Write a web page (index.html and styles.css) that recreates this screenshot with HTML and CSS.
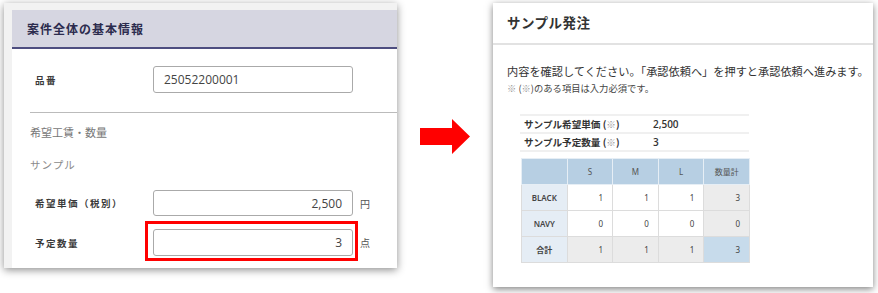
FILE: index.html
```html
<!DOCTYPE html>
<html lang="ja">
<head>
  <meta charset="UTF-8" />
  <title>サンプル発注</title>
  <link rel="stylesheet" href="styles.css">
</head>
<body>
  <div class="page">

    <!-- 入力画面 -->
    <div class="shot shot-left">
      <div class="card">
        <div class="card-head">案件全体の基本情報</div>
        <div class="card-body">
          <div class="row row-first">
            <span class="label">品番</span>
            <span class="input">25052200001</span>
          </div>
          <div class="sep"></div>
          <div class="section">希望工賃・数量</div>
          <div class="sub">サンプル</div>
          <div class="row row-price">
            <span class="label">希望単価（税別）</span>
            <span class="input num">2,500</span>
            <span class="unit">円</span>
          </div>
          <div class="row row-qty">
            <span class="label">予定数量</span>
            <span class="mark-wrap">
              <span class="input num">3</span>
              <span class="mark"></span>
            </span>
            <span class="unit">点</span>
          </div>
        </div>
      </div>
    </div>

    <div class="arrow">
      <svg width="50" height="36" viewBox="0 0 50 36">
        <polygon points="0,9 32,9 32,0 50,17.5 32,35 32,26 0,26" fill="#ff0000" />
      </svg>
    </div>

    <!-- 確認画面 -->
    <div class="shot shot-right">
      <div class="modal-head">サンプル発注</div>
      <div class="modal-body">
        <p class="lead">内容を確認してください。「承認依頼へ」を押すと承認依頼へ進みます。</p>
        <p class="note"><span class="kome">※</span> (<span class="kome">※</span>)のある項目は入力必須です。</p>

        <table class="info">
          <tr><th>サンプル希望単価 (<span class="kome">※</span>)</th><td>2,500</td></tr>
          <tr><th>サンプル予定数量 (<span class="kome">※</span>)</th><td>3</td></tr>
        </table>

        <table class="grid">
          <tr class="head">
            <th></th><th>S</th><th>M</th><th>L</th><th>数量計</th>
          </tr>
          <tr>
            <th class="side">BLACK</th><td>1</td><td>1</td><td>1</td><td class="sum">3</td>
          </tr>
          <tr>
            <th class="side">NAVY</th><td>0</td><td>0</td><td>0</td><td class="sum">0</td>
          </tr>
          <tr class="total">
            <th class="side">合計</th><td>1</td><td>1</td><td>1</td><td class="grand">3</td>
          </tr>
        </table>
      </div>
    </div>

  </div>
</body>
</html>
```

FILE: styles.css
```css
body {
  margin: 0;
  background: #fff;
  font-family: "Noto Sans CJK JP", "Noto Sans", sans-serif;
  color: #333;
}
.page {
  display: flex;
  align-items: flex-start;
  width: 878px;
  height: 293px;
  overflow: hidden;
}
.shot {
  box-shadow: 0 2px 8px rgba(0, 0, 0, 0.45);
}

/* left screenshot */
.shot-left {
  margin: 3px 0 0 4px;
  width: 393px;
  height: 265px;
  background: #f2f2f2;
  padding: 7px 0 0 8px;
  box-sizing: border-box;
  overflow: hidden;
}
.card {
  background: #fff;
  height: 100%;
}
.card-head {
  height: 37px;
  line-height: 37px;
  background: #d6d6e1;
  border-bottom: 2px solid #4e4e80;
  padding-left: 15px;
  font-size: 12px;
  font-weight: bold;
  color: #2c2c4e;
  letter-spacing: 1px;
}
.card-body {
  padding-left: 18px;
}
.row {
  display: flex;
  align-items: center;
  height: 27px;
}
.row-first {
  margin-top: 17px;
}
.row-price {
  margin-top: 15px;
  height: 26px;
}
.row-qty {
  margin-top: 13px;
}
.label {
  width: 118px;
  padding-left: 5px;
  font-size: 9.5px;
  font-weight: bold;
  color: #3a3a3a;
  letter-spacing: 1.5px;
}
.input {
  display: block;
  width: 200px;
  height: 100%;
  box-sizing: border-box;
  border: 1px solid #aaa;
  border-radius: 3px;
  padding: 0 10px;
  font-family: "Open Sans", "Noto Sans", sans-serif;
  font-size: 12px;
  line-height: 25px;
  color: #444;
}
.num {
  text-align: right;
}
.unit {
  margin-left: 7px;
  font-size: 10px;
  color: #555;
}
.mark-wrap {
  position: relative;
  height: 100%;
}
.mark {
  position: absolute;
  left: -8px;
  top: -8px;
  right: -5px;
  bottom: -5px;
  border: 3px solid #f00;
}
.sep {
  margin-top: 19px;
  border-top: 1px solid #bbb;
}
.section {
  margin-top: 9px;
  line-height: 20px;
  font-size: 11px;
  color: #777;
}
.sub {
  margin-top: 13px;
  line-height: 20px;
  font-size: 10.5px;
  color: #8a8a8a;
  letter-spacing: 1px;
}

/* arrow */
.arrow {
  margin: 119px 0 0 23px;
  width: 73px;
}

/* right screenshot */
.shot-right {
  margin-top: 3px;
  width: 380px;
  height: 284px;
  background: #fff;
  box-shadow: 0 2px 7px rgba(0, 0, 0, 0.5);
}
.modal-head {
  height: 40px;
  line-height: 38px;
  padding-left: 14px;
  font-size: 13.5px;
  font-weight: bold;
  color: #333;
  letter-spacing: 0.5px;
  border-bottom: 2px solid #e2e2e2;
}
.modal-body {
  padding: 18px 0 0 14px;
}
.lead {
  margin: 0;
  font-size: 11.2px;
  line-height: 16px;
  white-space: nowrap;
  color: #333;
}
.note {
  margin: 2px 0 0;
  font-size: 9.3px;
  line-height: 14px;
  color: #444;
}
.kome {
  color: #999;
}
.info {
  margin: 19px 0 0 13px;
  width: 229px;
  border-collapse: collapse;
  border-top: 2px solid #f0f0f0;
}
.info tr {
  border-bottom: 2px solid #f0f0f0;
}
.info th {
  width: 128px;
  text-align: left;
  padding: 0 0 0 4px;
  height: 15px;
  font-size: 9.6px;
  font-weight: bold;
  color: #333;
}
.info td {
  font-family: "Open Sans", "Noto Sans", sans-serif;
  font-size: 10px;
  font-weight: 600;
  color: #333;
}
.grid {
  margin: 6px 0 0 14px;
  width: 229px;
  border-collapse: collapse;
  table-layout: fixed;
  font-family: "Noto Sans", "Noto Sans CJK JP", sans-serif;
  font-size: 8px;
}
.grid th,
.grid td {
  height: 25px;
  border: 1px solid #dcdcdc;
  padding: 0 9px;
  color: #444;
}
.grid .head th {
  background: #b7cfe3;
  border-color: #e6eef5;
  text-align: center;
  font-weight: normal;
  color: #555;
}
.grid .side {
  background: #e5edf5;
  text-align: center;
  font-weight: 600;
}
.grid td {
  text-align: right;
  background: #fff;
}
.grid td.sum,
.grid .total td {
  background: #ececec;
}
.grid .total td.grand {
  background: #c7dbeb;
}
```
